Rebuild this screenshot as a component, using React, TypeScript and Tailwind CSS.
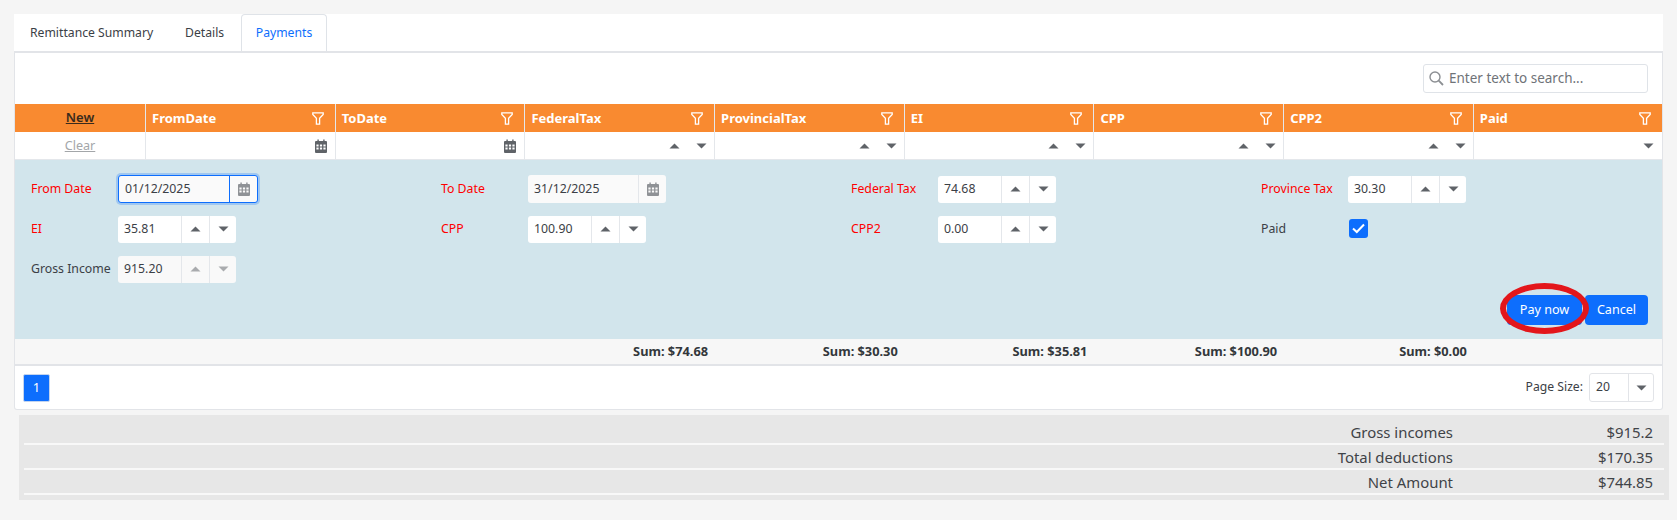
const font = "font-['Noto_Sans',sans-serif]";

function Up({ dim }: { dim?: boolean }) {
  return (
    <svg width="11" height="6" viewBox="0 0 11 6">
      <path d="M5.5 0.5 L10.5 5.5 L0.5 5.5 Z" fill={dim ? "#a9abae" : "#5f6368"} />
    </svg>
  );
}

function Down({ dim }: { dim?: boolean }) {
  return (
    <svg width="11" height="6" viewBox="0 0 11 6">
      <path d="M0.5 0.5 L10.5 0.5 L5.5 5.5 Z" fill={dim ? "#a9abae" : "#5f6368"} />
    </svg>
  );
}

function Funnel() {
  return (
    <svg width="12" height="13" viewBox="0 0 12 13" fill="none" stroke="#fff" strokeWidth="1.3">
      <path d="M0.8 0.8 H11.2 V2.4 L7.6 6.2 V12.2 H4.4 V6.2 L0.8 2.4 Z" />
    </svg>
  );
}

function Calendar({ color = "#5f6368" }: { color?: string }) {
  return (
    <svg width="12" height="14" viewBox="0 0 12 14">
      <path
        fill={color}
        fillRule="evenodd"
        d="M2.4 0.5h1.4v1.5h4.4V0.5h1.4v1.5H11a1 1 0 0 1 1 1V13a1 1 0 0 1-1 1H1a1 1 0 0 1-1-1V3a1 1 0 0 1 1-1h1.4z M1.4 5.6v1.8h2.2V5.6z M4.9 5.6v1.8h2.2V5.6z M8.4 5.6v1.8h2.2V5.6z M1.4 8.6v1.8h2.2V8.6z M4.9 8.6v1.8h2.2V8.6z M8.4 8.6v1.8h2.2V8.6z"
      />
    </svg>
  );
}

function HeaderCell({ title }: { title: string }) {
  return (
    <div className="flex items-center justify-between border-l border-[#e4e7eb] pl-[6px] pr-[11px] text-[13px] font-bold text-white">
      <span className="pt-[1px]">{title}</span>
      <Funnel />
    </div>
  );
}

function SpinFilter() {
  return (
    <div className="flex items-center justify-end gap-[16px] border-l border-[#e4e7eb] pr-[7px]">
      <Up />
      <Down />
    </div>
  );
}

function DateFilter() {
  return (
    <div className="flex items-center justify-end border-l border-[#e4e7eb] pr-[8px]">
      <Calendar />
    </div>
  );
}

function Label({ text, required }: { text: string; required?: boolean }) {
  return (
    <span className={`w-[87px] shrink-0 text-[12.3px] ${required ? "text-[#ff0000]" : "text-[#3b4046]"}`}>
      {text}
    </span>
  );
}

function NumberBox({ value, disabled }: { value: string; disabled?: boolean }) {
  return (
    <div
      className={`flex h-[27px] w-[118px] rounded-[3px] text-[12.3px] text-[#3b4046] ${disabled ? "bg-[#f9f9f9]" : "bg-white"}`}
    >
      <span className="flex flex-1 items-center pl-[6px]">{value}</span>
      <span className="flex w-[28px] items-center justify-center border-l border-[#e4e7eb]">
        <Up dim={disabled} />
      </span>
      <span className="flex w-[27px] items-center justify-center border-l border-[#e4e7eb]">
        <Down dim={disabled} />
      </span>
    </div>
  );
}

function DateBox({ value, focused }: { value: string; focused?: boolean }) {
  return (
    <div
      className={`flex h-[28px] rounded-[3px] bg-[#fafafa] text-[12.3px] text-[#3b4046] ${focused ? "w-[140px] border border-[#0d6efd] shadow-[0_0_0_2px_rgba(13,110,253,0.25)]" : "w-[138px]"}`}
    >
      <span className="flex flex-1 items-center pl-[6px]">{value}</span>
      <span
        className={`flex w-[28px] items-center justify-center border-l ${focused ? "border-[#0d6efd]" : "border-[#e4e7eb]"}`}
      >
        <Calendar color="#8f9296" />
      </span>
    </div>
  );
}

function Field({ children }: { children: React.ReactNode }) {
  return <div className="flex h-[28px] items-center">{children}</div>;
}

function SumCell({ text }: { text?: string }) {
  return <div className="pr-[6px] text-right">{text}</div>;
}

function TotalRow({ label, value }: { label: string; value: string }) {
  return (
    <div className="flex h-[25px] items-center justify-end border-b-2 border-[#f8f8f8] pt-[1px] text-[14.9px] leading-none text-[#3f4347]">
      <span>{label}</span>
      <span className="w-[211px] pr-[11px] text-right">{value}</span>
    </div>
  );
}

export default function App() {
  const columns = "grid grid-cols-[130px_repeat(7,189.7px)_1fr]";

  return (
    <div className={`h-[520px] bg-[#f5f5f5] pt-[14px] ${font}`}>
      <div className="ml-[14px] w-[1649px]">
        <div className="flex h-[37px] items-end bg-white text-[12.2px] text-[#3b4046]">
          <span className="flex h-[37px] w-[171px] items-center pl-[16px] pt-[1px]">Remittance Summary</span>
          <span className="flex h-[37px] w-[56px] items-center pt-[1px]">Details</span>
          <span className="flex h-[37px] w-[86px] items-center justify-center rounded-t-[4px] border border-b-0 border-[#dfe3e8] pt-[1px] text-[#0d6efd]">
            Payments
          </span>
        </div>
        <div className="rounded-b-[3px] border border-t-2 border-[#e2e4e8] bg-white">
          <div className="flex h-[51px] items-center justify-end pb-[1px] pr-[14px]">
            <div className="flex h-[29px] w-[225px] items-center gap-[5px] rounded-[3px] border border-[#dfe3e8] pl-[5px] text-[13.5px] text-[#6f7378]">
              <svg width="15" height="15" viewBox="0 0 15 15" fill="none" stroke="#8c8f93" strokeWidth="1.4">
                <circle cx="6" cy="6" r="5" />
                <path d="M9.7 9.7 L14 14" strokeWidth="1.8" />
              </svg>
              <span>Enter text to search...</span>
            </div>
          </div>

          <div className={`${columns} h-[28px] bg-[#f98a30]`}>
            <div className="flex items-center justify-center text-[13px] font-semibold text-[#3a2a1c] underline">New</div>
            <HeaderCell title="FromDate" />
            <HeaderCell title="ToDate" />
            <HeaderCell title="FederalTax" />
            <HeaderCell title="ProvincialTax" />
            <HeaderCell title="EI" />
            <HeaderCell title="CPP" />
            <HeaderCell title="CPP2" />
            <HeaderCell title="Paid" />
          </div>

          <div className={`${columns} h-[28px] border-b border-[#e4e7eb]`}>
            <div className="flex items-center justify-center pt-[1px] text-[12.6px] text-[#a3a6a9] underline">Clear</div>
            <DateFilter />
            <DateFilter />
            <SpinFilter />
            <SpinFilter />
            <SpinFilter />
            <SpinFilter />
            <SpinFilter />
            <div className="flex items-center justify-end border-l border-[#e4e7eb] pr-[8px]">
              <Down />
            </div>
          </div>

          <div className="relative h-[179px] bg-[#d2e5ec] pl-[16px] pr-[14px] pt-[15px]">
            <div className="grid grid-cols-[410px_410px_410px_1fr] gap-y-[12px]">
              <Field>
                <Label text="From Date" required />
                <DateBox value="01/12/2025" focused />
              </Field>
              <Field>
                <Label text="To Date" required />
                <DateBox value="31/12/2025" />
              </Field>
              <Field>
                <Label text="Federal Tax" required />
                <NumberBox value="74.68" />
              </Field>
              <Field>
                <Label text="Province Tax" required />
                <NumberBox value="30.30" />
              </Field>
              <Field>
                <Label text="EI" required />
                <NumberBox value="35.81" />
              </Field>
              <Field>
                <Label text="CPP" required />
                <NumberBox value="100.90" />
              </Field>
              <Field>
                <Label text="CPP2" required />
                <NumberBox value="0.00" />
              </Field>
              <Field>
                <Label text="Paid" />
                <span className="mb-[1px] ml-[1px] flex h-[19px] w-[19px] items-center justify-center rounded-[3px] bg-[#0d6efd]">
                  <svg width="13" height="11" viewBox="0 0 13 11" fill="none" stroke="#fff" strokeWidth="2">
                    <path d="M1 5.5 L4.8 9 L12 1.5" />
                  </svg>
                </span>
              </Field>
              <Field>
                <Label text="Gross Income" />
                <NumberBox value="915.20" disabled />
              </Field>
            </div>
            <div className="mt-[12px] flex justify-end gap-[3px]">
              <button className="h-[30px] w-[75px] rounded-[4px] bg-[#0d6efd] text-[12.6px] text-white">Pay now</button>
              <button className="h-[30px] w-[63px] rounded-[4px] bg-[#0d6efd] text-[12.6px] text-white">Cancel</button>
            </div>
            <div className="absolute left-[1485px] top-[123px] h-[51px] w-[89px] rounded-[50%] border-[6px] border-[#e3161b]" />
          </div>

          <div className={`${columns} h-[27px] items-center border-b-2 border-[#e2e4e8] bg-[#f7f7f7] text-[12.8px] font-bold text-[#33373b]`}>
            <SumCell />
            <SumCell />
            <SumCell />
            <SumCell text="Sum: $74.68" />
            <SumCell text="Sum: $30.30" />
            <SumCell text="Sum: $35.81" />
            <SumCell text="Sum: $100.90" />
            <SumCell text="Sum: $0.00" />
            <SumCell />
          </div>

          <div className="flex h-[43px] items-center justify-between pl-[8px] pr-[8px]">
            <span className="flex h-[28px] w-[27px] items-center justify-center rounded-[2px] border border-[#c3d4ee] bg-[#0d6efd] text-[13px] text-white">1</span>
            <div className="flex items-center gap-[6px] text-[12.2px] text-[#3b4046]">
              <span>Page Size:</span>
              <div className="flex h-[29px] w-[65px] rounded-[3px] border border-[#e2e4e8]">
                <span className="flex w-[38px] items-center pl-[6px]">20</span>
                <span className="flex flex-1 items-center justify-center border-l border-[#e2e4e8]">
                  <Down />
                </span>
              </div>
            </div>
          </div>
        </div>
      </div>

      <div className="ml-[19px] mt-[5px] h-[85px] w-[1650px] bg-[#e7e7e7] pl-[5px] pr-[5px] pt-[5px]">
        <TotalRow label="Gross incomes" value="$915.2" />
        <TotalRow label="Total deductions" value="$170.35" />
        <TotalRow label="Net Amount" value="$744.85" />
      </div>
    </div>
  );
}
